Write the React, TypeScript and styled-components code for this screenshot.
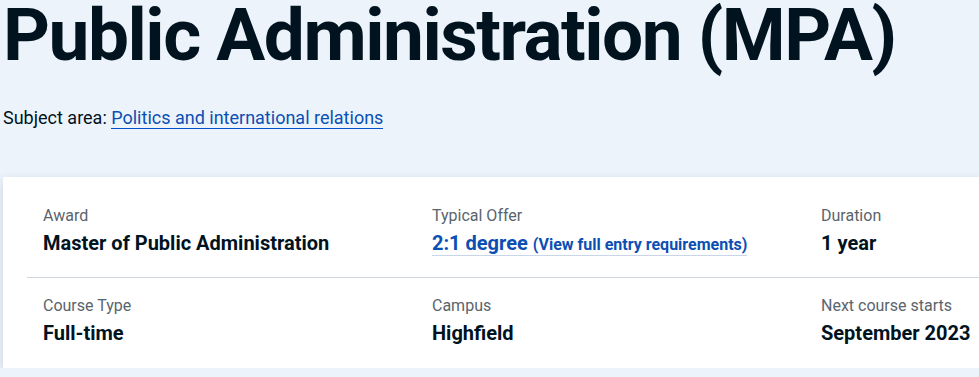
import styled, { createGlobalStyle } from 'styled-components';

const GlobalStyle = createGlobalStyle`
  html, body {
    margin: 0;
    padding: 0;
    background: #edf3fb;
    overflow: hidden;
  }
  body {
    font-family: Roboto, 'Liberation Sans', sans-serif;
    color: #00131f;
  }
`;

const Page = styled.div`
  padding: 0 0 0 3px;
`;

const Title = styled.h1`
  margin: 0;
  font-size: 73px;
  line-height: 70px;
  font-weight: 700;
  letter-spacing: -1.5px;
  color: #00131f;
  white-space: nowrap;
`;

const Subject = styled.p`
  margin: 34px 0 0;
  font-size: 18px;
  line-height: 28px;
  color: #00131f;
`;

const SubjectLink = styled.a`
  color: #0b4fb3;
  text-decoration: none;
  border-bottom: 1px solid #0052cc;
`;

const Card = styled.section`
  margin-top: 45px;
  width: 1215px;
  background: #fff;
  padding: 11px 24px 3px;
  box-sizing: border-box;
  box-shadow: 0 4px 10px rgba(30, 50, 80, 0.16);
`;

const Row = styled.div<{ $divider?: boolean }>`
  display: grid;
  grid-template-columns: repeat(3, 389px);
  border-top: ${(p) => (p.$divider ? '1px solid #d0d7de' : 'none')};
`;

const Cell = styled.div`
  padding: 16px 16px 17px;
`;

const Label = styled.div`
  font-size: 16px;
  line-height: 24px;
  color: #5a646c;
`;

const Value = styled.div`
  font-size: 20px;
  line-height: 30px;
  font-weight: 700;
  color: #00131f;
  white-space: nowrap;
`;

const OfferLink = styled.a`
  color: #0b4fb3;
  text-decoration: none;
  border-bottom: 1px solid #c9d6e8;
`;

const OfferNote = styled.span`
  font-size: 16px;
`;

type Item = { label: string; value: string; offer?: boolean };

const rows: Item[][] = [
  [
    { label: 'Award', value: 'Master of Public Administration' },
    { label: 'Typical Offer', value: '2:1 degree', offer: true },
    { label: 'Duration', value: '1 year' },
  ],
  [
    { label: 'Course Type', value: 'Full-time' },
    { label: 'Campus', value: 'Highfield' },
    { label: 'Next course starts', value: 'September 2023' },
  ],
];

function App() {
  return (
    <Page>
      <GlobalStyle />
      <Title>Public Administration (MPA)</Title>
      <Subject>
        Subject area: <SubjectLink href="#">Politics and international relations</SubjectLink>
      </Subject>
      <Card>
        {rows.map((row, i) => (
          <Row key={i} $divider={i > 0}>
            {row.map((item) => (
              <Cell key={item.label}>
                <Label>{item.label}</Label>
                <Value>
                  {item.offer ? (
                    <OfferLink href="#">
                      {item.value} <OfferNote>(View full entry requirements)</OfferNote>
                    </OfferLink>
                  ) : (
                    item.value
                  )}
                </Value>
              </Cell>
            ))}
          </Row>
        ))}
      </Card>
    </Page>
  );
}

export default App;
